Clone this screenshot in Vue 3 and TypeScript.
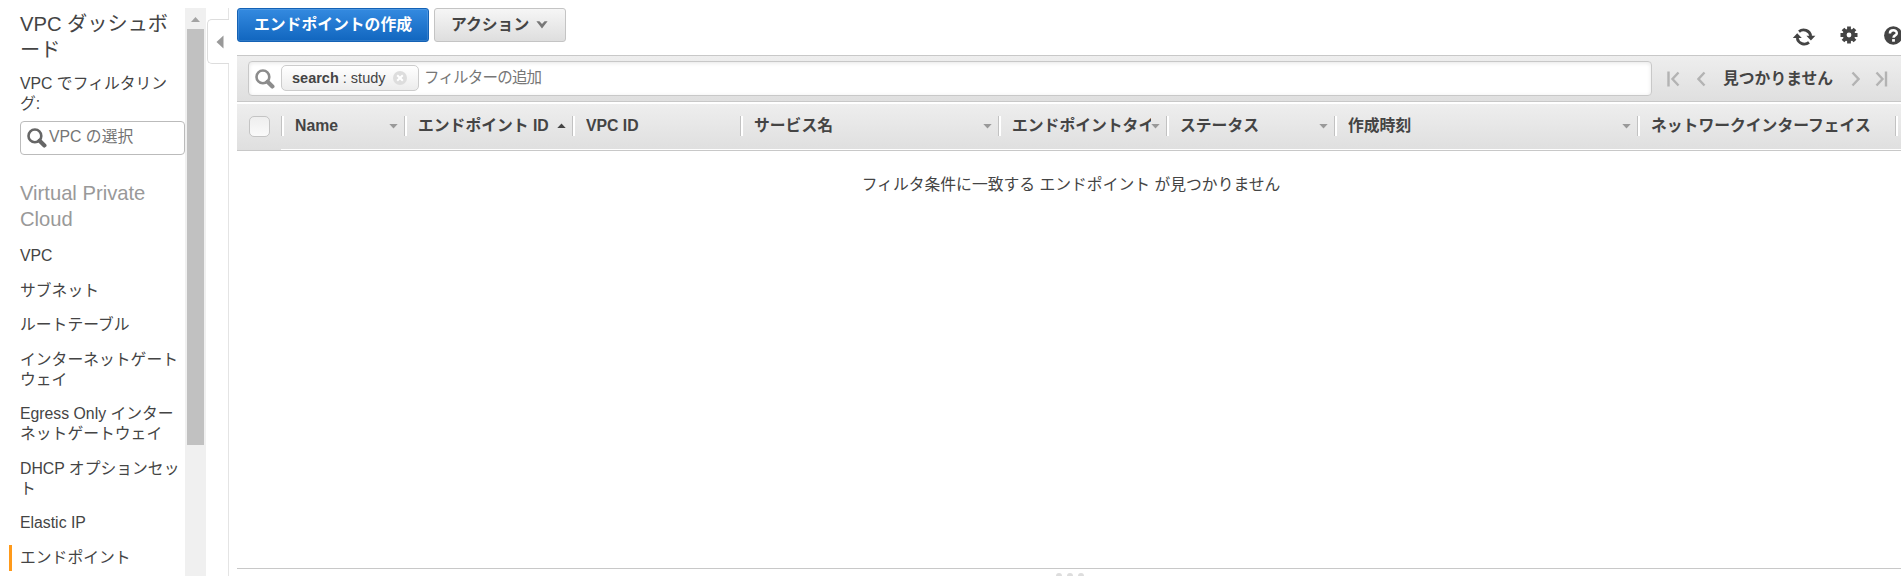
<script setup lang="ts">
interface NavItem {
  lines: string[]
  active?: boolean
}

interface Column {
  label: string
  width: number
  sort?: 'asc' | 'none'
}

const navItems: NavItem[] = [
  { lines: ['VPC'] },
  { lines: ['サブネット'] },
  { lines: ['ルートテーブル'] },
  { lines: ['インターネットゲート', 'ウェイ'] },
  { lines: ['Egress Only インター', 'ネットゲートウェイ'] },
  { lines: ['DHCP オプションセッ', 'ト'] },
  { lines: ['Elastic IP'] },
  { lines: ['エンドポイント'], active: true },
]

const columns: Column[] = [
  { label: 'Name', width: 123, sort: 'none' },
  { label: 'エンドポイント ID', width: 168, sort: 'asc' },
  { label: 'VPC ID', width: 168 },
  { label: 'サービス名', width: 258, sort: 'none' },
  { label: 'エンドポイントタイ', width: 168, sort: 'none' },
  { label: 'ステータス', width: 168, sort: 'none' },
  { label: '作成時刻', width: 303, sort: 'none' },
  { label: 'ネットワークインターフェイス', width: 258 },
  { label: '', width: 168 },
]
</script>

<template>
  <div class="console">
    <aside class="sidebar">
      <div class="nav-body">
        <div class="dash">VPC ダッシュボ<br />ード</div>
        <div class="filter-label">VPC でフィルタリン<br />グ:</div>
        <div class="vpc-select">
          <svg class="mag" width="20" height="20" viewBox="0 0 20 20">
            <circle cx="7.9" cy="7.9" r="6.4" fill="none" stroke="#666" stroke-width="2.6" />
            <path d="M12.6 12.8L17.4 17.4" stroke="#666" stroke-width="4.2" stroke-linecap="round" />
          </svg>
          <span>VPC の選択</span>
        </div>
        <div class="group">Virtual Private<br />Cloud</div>
        <ul class="nav">
          <li v-for="item in navItems" :key="item.lines[0]" :class="{ active: item.active }">
            <div v-for="line in item.lines" :key="line">{{ line }}</div>
          </li>
        </ul>
      </div>
      <div class="scroll">
        <svg width="21" height="21" viewBox="0 0 21 21"><path d="M6 14L10.5 9L15 14Z" fill="#a3a3a3" /></svg>
        <div class="thumb"></div>
      </div>
    </aside>

    <div class="divider">
      <div class="collapse">
        <svg width="8" height="14" viewBox="0 0 8 14"><path d="M7.5 0.5V13.5L0.5 7Z" fill="#999" /></svg>
      </div>
    </div>

    <main class="main">
      <header class="actions">
        <button class="btn primary">エンドポイントの作成</button>
        <button class="btn plain">
          アクション
          <svg width="12" height="9" viewBox="0 0 12 9"><path d="M0.4 1.2H3.4L6 3.9L8.6 1.2H11.6L6 8.4Z" fill="#777" /></svg>
        </button>
        <div class="tools">
          <svg width="24" height="20" viewBox="0 0 24 20">
            <path d="M7 4.6A7.3 7.3 0 0 1 18.8 9M17 15.4A7.3 7.3 0 0 1 5.2 11" fill="none" stroke="#444" stroke-width="2.8" />
            <path d="M14.4 8.7H23.4L18.9 13.6ZM0.8 11.1H9.8L5.2 6.2Z" fill="#444" />
          </svg>
          <svg class="gear" width="18" height="18" viewBox="0 0 18 18">
            <g stroke="#444" stroke-width="3.8">
              <path d="M9 0.5V17.5M0.5 9H17.5M3 3L15 15M15 3L3 15" />
            </g>
            <circle cx="9" cy="9" r="6.3" fill="#444" />
            <circle cx="9" cy="9" r="2.4" fill="#fff" />
          </svg>
          <svg class="help" width="18" height="19" viewBox="0 0 18 19">
            <circle cx="9.3" cy="9.5" r="9.2" fill="#444" />
            <path d="M5.9 7.4C5.9 3.3 12.8 3.3 12.8 7.2C12.8 9.4 9.5 9.3 9.5 11.7" fill="none" stroke="#fff" stroke-width="2.5" />
            <rect x="8.1" y="13.1" width="2.8" height="2.6" fill="#fff" />
          </svg>
        </div>
      </header>

      <section class="filterbar">
        <div class="search">
          <svg class="mag" width="20" height="20" viewBox="0 0 20 20">
            <circle cx="7.9" cy="7.9" r="6.4" fill="none" stroke="#8c8c8c" stroke-width="2.6" />
            <path d="M12.6 12.8L17.4 17.4" stroke="#8c8c8c" stroke-width="4.2" stroke-linecap="round" />
          </svg>
          <div class="tag">
            <span><b>search</b> : study</span>
            <svg width="14" height="14" viewBox="0 0 14 14">
              <circle cx="7" cy="7" r="7" fill="#ddd" />
              <path d="M4.2 4.2L9.8 9.8M9.8 4.2L4.2 9.8" stroke="#fff" stroke-width="2" />
            </svg>
          </div>
          <span class="placeholder">フィルターの追加</span>
        </div>
        <div class="pager">
          <svg width="13" height="16" viewBox="0 0 13 16"><path d="M1.5 0.5V15.5M11.5 1.5L5.5 8L11.5 14.5" /></svg>
          <svg class="prev" width="9" height="16" viewBox="0 0 9 16"><path d="M7.5 1.5L1.5 8L7.5 14.5" /></svg>
          <strong>見つかりません</strong>
          <svg class="next" width="9" height="16" viewBox="0 0 9 16"><path d="M1.5 1.5L7.5 8L1.5 14.5" /></svg>
          <svg class="last" width="13" height="16" viewBox="0 0 13 16"><path d="M11 0.5V15.5M1.5 1.5L7.5 8L1.5 14.5" /></svg>
        </div>
      </section>

      <section class="thead">
        <div class="check"><i></i></div>
        <div v-for="(col, i) in columns" :key="i" class="col" :style="{ width: col.width + 'px' }">
          <span class="label">{{ col.label }}</span>
          <svg v-if="col.sort" width="9" height="6" viewBox="0 0 9 6">
            <path v-if="col.sort === 'asc'" d="M0.3 5L4.5 0.6L8.7 5Z" fill="#444" />
            <path v-else d="M0.3 1L4.5 5.4L8.7 1Z" fill="#999" />
          </svg>
        </div>
      </section>

      <section class="empty">フィルタ条件に一致する エンドポイント が見つかりません</section>

      <footer class="splitter"><i></i><i></i><i></i></footer>
    </main>
  </div>
</template>

<style>
body {
  background: #fff;
  overflow: hidden;
}
</style>

<style scoped>
.console {
  display: flex;
  width: 1901px;
  height: 576px;
  overflow: hidden;
  box-sizing: border-box;
  padding-top: 8px;
  background: #fff;
  color: #444;
  font: 15.8px/20px 'Liberation Sans', 'Noto Sans CJK JP', sans-serif;
  white-space: nowrap;
}
.console * {
  box-sizing: border-box;
}
svg {
  display: block;
  flex: none;
}
.sidebar {
  display: flex;
  flex: none;
  width: 206px;
  height: 568px;
}
.nav-body {
  width: 185px;
  padding-left: 20px;
  overflow: hidden;
}
.dash {
  padding-top: 3px;
  font-size: 20.2px;
  line-height: 26px;
}
.filter-label {
  margin-top: 11px;
}
.vpc-select {
  display: flex;
  align-items: center;
  gap: 2px;
  width: 165px;
  height: 34px;
  margin-top: 7px;
  padding-left: 6px;
  padding-bottom: 2px;
  border: 1px solid #bbb;
  border-radius: 4px;
  color: #757575;
}
.vpc-select .mag {
  margin-top: 2px;
}
.group {
  margin-top: 25px;
  color: #999;
  font-size: 20.2px;
  line-height: 26px;
}
.nav {
  display: flex;
  flex-direction: column;
  gap: 14.5px;
  margin: 14px 0 0 -11px;
  padding: 0;
  list-style: none;
}
.nav li {
  padding-left: 11px;
}
.nav li.active {
  margin-top: -3px;
  padding: 3px 0 3px 8px;
  border-left: 3px solid #ff9a1a;
}
.scroll {
  width: 21px;
  background: #f0f0f0;
}
.thumb {
  width: 17px;
  height: 416px;
  margin-left: 2px;
  background: #c1c1c1;
}
.divider {
  flex: none;
  width: 23px;
  border-right: 1px solid #e4e4e4;
}
.collapse {
  display: flex;
  align-items: center;
  width: 22px;
  height: 45px;
  margin-top: 11px;
  margin-left: 1px;
  padding-left: 8px;
  border: 1px solid #ddd;
  border-right: 0;
  border-radius: 5px 0 0 5px;
  background: #fff;
}
.main {
  display: flex;
  flex: none;
  flex-direction: column;
  width: 1664px;
  height: 568px;
  margin-left: 8px;
}
.actions {
  display: flex;
  flex: none;
  gap: 5px;
  height: 47px;
}
.btn {
  display: flex;
  align-items: center;
  height: 34px;
  padding: 0 0 1px;
  border: 1px solid #c4c4c4;
  border-radius: 3px;
  font: inherit;
  font-weight: bold;
}
.primary {
  justify-content: center;
  width: 192px;
  border-color: #1462b5;
  background: linear-gradient(#348ae0, #1166bf);
  box-shadow: inset 0 0 0 1px rgba(255, 255, 255, 0.12);
  color: #fff;
}
.plain {
  gap: 7px;
  width: 132px;
  padding-left: 16px;
  background: linear-gradient(#f6f6f6, #dedede);
  color: #444;
}
.tools {
  display: flex;
  align-items: center;
  margin: 10px 0 0 auto;
  width: 109px;
}
.gear {
  margin: -3px 0 0 24px;
}
.help {
  margin: -2px 0 0 26px;
}
.filterbar {
  display: flex;
  flex: none;
  align-items: center;
  height: 47px;
  padding-left: 11px;
  border-top: 1px solid #c8c8c8;
  border-bottom: 1px solid #c8c8c8;
  background: linear-gradient(#eee, #dfdfdf);
}
.search {
  display: flex;
  align-items: center;
  width: 1404px;
  height: 35px;
  padding-left: 6px;
  border: 1px solid #c8c8c8;
  border-radius: 4px;
  background: #fff;
  box-shadow: inset 0 1px 4px rgba(0, 0, 0, 0.1);
}
.tag {
  display: flex;
  align-items: center;
  justify-content: space-between;
  width: 138px;
  height: 26px;
  margin: -1px 5px 0 6px;
  padding: 0 11px 0 10px;
  border: 1px solid #ccc;
  border-radius: 5px;
  background: linear-gradient(#fff, #ececec);
  font-size: 14.5px;
}
.placeholder {
  margin-top: -2px;
  color: #777;
  font-size: 15.5px;
  letter-spacing: -0.8px;
}
.pager {
  display: flex;
  align-items: center;
  padding-left: 15px;
}
.pager path {
  fill: none;
  stroke: #b3b3b3;
  stroke-width: 2.4;
}
.pager .prev {
  margin: 0 17px 0 17px;
}
.pager .next {
  margin-left: 18px;
}
.pager .last {
  margin-left: 15px;
}
.thead {
  display: flex;
  flex: none;
  height: 47px;
  margin-top: 2px;
  overflow: hidden;
  border-bottom: 1px solid #c8c8c8;
  background: linear-gradient(#eee, #dfdfdf);
}
.check {
  flex: none;
  width: 44px;
  padding: 12px 0 0 12px;
}
.check i {
  display: block;
  width: 21px;
  height: 21px;
  border: 1px solid #c4c4c4;
  border-radius: 5px;
  background: linear-gradient(#eee, #fafafa);
}
.col {
  display: flex;
  flex: none;
  height: 46px;
  padding: 0 6px 0 0;
  align-items: center;
  border-bottom: 1px solid #fff;
  font-weight: bold;
}
.col::before {
  content: '';
  flex: none;
  width: 2px;
  height: 20px;
  margin-top: -1px;
  border-left: 1px solid #c2c2c2;
  background: #fff;
}
.label {
  flex: 1;
  margin: -2px 0 0 11px;
  overflow: hidden;
}
.col svg {
  margin-top: -2px;
}
.empty {
  margin-top: 24px;
  margin-left: 4px;
  text-align: center;
}
.splitter {
  display: flex;
  flex: none;
  gap: 5px;
  height: 8px;
  margin-top: auto;
  padding: 4px 0 0 819px;
  border-top: 1px solid #c8c8c8;
  overflow: hidden;
}
.splitter i {
  flex: none;
  width: 6px;
  height: 6px;
  border-radius: 3px;
  background: #ddd;
}
</style>
